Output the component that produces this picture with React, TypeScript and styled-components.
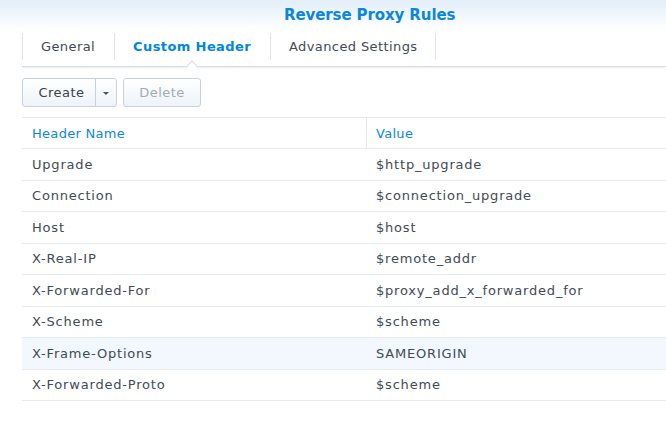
import React from "react";
import styled, { createGlobalStyle } from "styled-components";

const GlobalStyle = createGlobalStyle`
  html, body {
    margin: 0;
    padding: 0;
    background: #ffffff;
  }
  body {
    font-family: "DejaVu Sans", Verdana, sans-serif;
    font-size: 13px;
    color: #414b55;
  }
`;

const Window = styled.div`
  width: 666px;
  height: 435px;
  overflow: hidden;
  background: #ffffff;
`;

const TitleBar = styled.div`
  height: 30px;
  display: flex;
  align-items: center;
  padding-left: 284px;
  background: linear-gradient(to bottom, #e2eef9 0%, #f3f8fd 60%, #ffffff 100%);
`;

const Title = styled.h1`
  margin: 0;
  font-size: 15px;
  font-weight: bold;
  color: #0b86df;
  white-space: nowrap;
  letter-spacing: -0.1px;
`;

const Body = styled.div`
  padding-left: 22px;
`;

const TabBar = styled.div`
  position: relative;
  display: flex;
  height: 36px;
  border-bottom: 1px solid #d6dce2;
  box-shadow: 0 1px 2px rgba(0, 0, 0, 0.07);
`;

const Tab = styled.div<{ $active?: boolean; $last?: boolean }>`
  position: relative;
  display: flex;
  align-items: center;
  padding: 0 19px;
  height: 33px;
  white-space: nowrap;
  letter-spacing: 0.4px;
  color: ${(p) => (p.$active ? "#0086e5" : "#414b55")};
  font-weight: ${(p) => (p.$active ? "bold" : "normal")};

  &::before {
    content: "";
    position: absolute;
    left: 0;
    top: 3px;
    height: 27px;
    border-left: 1px solid #dfe5ea;
  }

  ${(p) =>
    p.$last
      ? `&::after {
    content: "";
    position: absolute;
    right: 0;
    top: 3px;
    height: 27px;
    border-left: 1px solid #dfe5ea;
  }`
      : ""}
`;

const Notch = styled.span`
  position: absolute;
  left: 50%;
  bottom: -7px;
  width: 7px;
  height: 7px;
  margin-left: -4px;
  background: #ffffff;
  border-left: 1px solid #d6dce2;
  border-top: 1px solid #d6dce2;
  transform: rotate(45deg);
`;

const Toolbar = styled.div`
  display: flex;
  gap: 6px;
  margin-top: 11px;
`;

const ButtonGroup = styled.div`
  display: flex;
  height: 29px;
  box-sizing: border-box;
  border: 1px solid #c8d2dc;
  border-radius: 3px;
  background: linear-gradient(to bottom, #ffffff 0%, #eef3f8 100%);
  overflow: hidden;
`;

const Button = styled.button<{ $width: number; $disabled?: boolean }>`
  width: ${(p) => p.$width}px;
  height: 100%;
  padding: 0 0 0 ${(p) => (p.$disabled ? 0 : 5)}px;
  border: none;
  background: transparent;
  font-family: inherit;
  font-size: 13px;
  letter-spacing: 0.5px;
  color: ${(p) => (p.$disabled ? "#a3acb6" : "#38424c")};
`;

const Caret = styled.button`
  width: 21px;
  height: 100%;
  padding: 0;
  border: none;
  border-left: 1px solid #c8d2dc;
  background: transparent;
  display: flex;
  align-items: center;
  justify-content: center;

  &::after {
    content: "";
    border-left: 3.5px solid transparent;
    border-right: 3.5px solid transparent;
    border-top: 3.5px solid #4a545e;
    margin-top: 1px;
  }
`;

const Table = styled.div`
  margin-top: 10px;
  border-top: 1px solid #e3e8ec;
`;

const Row = styled.div<{ $header?: boolean; $selected?: boolean }>`
  display: grid;
  grid-template-columns: 345px 1fr;
  height: ${(p) => (p.$header ? "31px" : "31.5px")};
  box-sizing: border-box;
  border-bottom: 1px solid #e6ebef;
  background: ${(p) => (p.$selected ? "#f2f8fd" : "transparent")};
  color: ${(p) => (p.$header ? "#0a88e2" : "#414b55")};
  letter-spacing: ${(p) => (p.$header ? "0.3px" : "0.8px")};
`;

const Cell = styled.div<{ $divider?: boolean }>`
  display: flex;
  align-items: center;
  padding-left: ${(p) => (p.$divider ? "10px" : "9px")};
  white-space: nowrap;
  border-right: ${(p) => (p.$divider ? "1px solid #e3e8ec" : "none")};
`;

const NameCell = styled(Cell)`
  padding-left: 10px;
`;

const rows = [
  ["Upgrade", "$http_upgrade"],
  ["Connection", "$connection_upgrade"],
  ["Host", "$host"],
  ["X-Real-IP", "$remote_addr"],
  ["X-Forwarded-For", "$proxy_add_x_forwarded_for"],
  ["X-Scheme", "$scheme"],
  ["X-Frame-Options", "SAMEORIGIN"],
  ["X-Forwarded-Proto", "$scheme"],
];

export default function App() {
  return (
    <Window>
      <GlobalStyle />
      <TitleBar>
        <Title>Reverse Proxy Rules</Title>
      </TitleBar>
      <Body>
        <TabBar>
          <Tab>General</Tab>
          <Tab $active>
            Custom Header
            <Notch />
          </Tab>
          <Tab $last>Advanced Settings</Tab>
        </TabBar>
        <Toolbar>
          <ButtonGroup>
            <Button $width={72}>Create</Button>
            <Caret />
          </ButtonGroup>
          <ButtonGroup>
            <Button $width={76} $disabled>
              Delete
            </Button>
          </ButtonGroup>
        </Toolbar>
        <Table>
          <Row $header>
            <Cell $divider>Header Name</Cell>
            <Cell>Value</Cell>
          </Row>
          {rows.map(([name, value]) => (
            <Row key={name} $selected={name === "X-Frame-Options"}>
              <NameCell>{name}</NameCell>
              <Cell>{value}</Cell>
            </Row>
          ))}
        </Table>
      </Body>
    </Window>
  );
}
